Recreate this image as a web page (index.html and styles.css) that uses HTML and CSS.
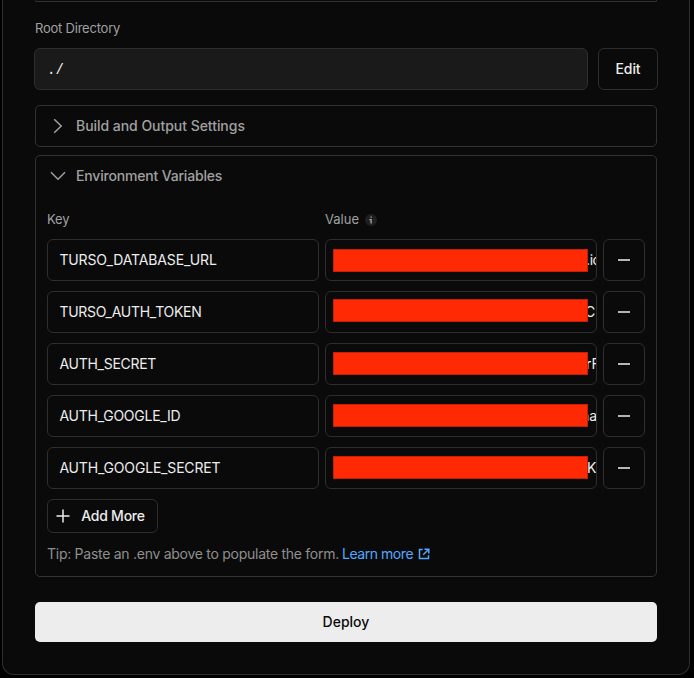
FILE: index.html
```html
<!DOCTYPE html>
<html lang="en">
<head>
<meta charset="utf-8">
<title>Deploy</title>
<link rel="stylesheet" href="styles.css">
</head>
<body>
<main class="card">
  <div class="previous-field"></div>
  <div class="label root-label"><span>Root Directory</span></div>
  <div class="root-row">
    <div class="root-input"><span>./</span></div>
    <button class="button edit"><span>Edit</span></button>
  </div>
  <section class="panel build">
    <div class="heading">
      <svg width="16" height="16" viewBox="0 0 16 16"><path d="M4.2 1.2 11.2 8l-7 6.8"/></svg>
      <span class="build-title">Build and Output Settings</span>
    </div>
  </section>
  <section class="panel environment">
    <div class="heading">
      <svg width="16" height="16" viewBox="0 0 16 16"><path d="M1 4.3 8 11.3l7-7"/></svg>
      <span class="env-title">Environment Variables</span>
    </div>
    <div class="columns label">
      <span class="key-label">Key</span>
      <span class="value-label">Value <svg class="info" width="12" height="12" viewBox="0 0 12 12"><circle cx="6" cy="6" r="6"/><path d="M5.4 2.5h1.4v1.3H5.4zM4.3 5h2.5v4.4H5.4V6.2H4.3z"/></svg></span>
    </div>
    <div class="rows">
      <div class="row"><div class="input"><span class="k1">TURSO_DATABASE_URL</span></div><div class="input value"><i class="redaction first"></i><span class="v1">.io</span></div><button class="button remove" aria-label="Remove"><i></i></button></div>
      <div class="row"><div class="input"><span class="k2">TURSO_AUTH_TOKEN</span></div><div class="input value"><i class="redaction second"></i><span class="v2">C</span></div><button class="button remove" aria-label="Remove"><i></i></button></div>
      <div class="row"><div class="input"><span class="k3">AUTH_SECRET</span></div><div class="input value"><i class="redaction"></i><span class="v3">rF</span></div><button class="button remove" aria-label="Remove"><i></i></button></div>
      <div class="row"><div class="input"><span class="k4">AUTH_GOOGLE_ID</span></div><div class="input value"><i class="redaction"></i><span class="v4">na</span></div><button class="button remove" aria-label="Remove"><i></i></button></div>
      <div class="row"><div class="input"><span class="k5">AUTH_GOOGLE_SECRET</span></div><div class="input value"><i class="redaction"></i><span>K</span></div><button class="button remove" aria-label="Remove"><i></i></button></div>
    </div>
    <button class="button add"><svg width="14" height="14" viewBox="0 0 14 14"><path d="M7 .5v13M.5 7h13"/></svg><span>Add More</span></button>
    <p class="tip"><span class="tip-text">Tip: Paste an .env above to populate the form.</span><a><span>Learn more</span><svg width="12" height="12" viewBox="0 0 12 12"><path d="M4.7 1.5H1.5v9h9V7.3M6.5 1.2h4.3v4.3M10.5 1.5 5.2 6.8"/></svg></a></p>
  </section>
  <button class="deploy"><span>Deploy</span></button>
</main>
</body>
</html>
```
FILE: styles.css
```css
* { box-sizing: border-box; }
body { margin: 0; height: 678px; overflow: hidden; background: #000; color: #ededed; font: 14px/20px Inter, "Liberation Sans", sans-serif; }
button { margin: 0; padding: 0; font: inherit; color: inherit; }
svg { flex: none; fill: none; stroke: currentColor; stroke-width: 1.5; }
span { white-space: nowrap; }
.card { width: 688px; height: 675px; margin-left: 2px; padding: 0 32px; background: #0a0a0a; border: 1px solid #2e2e2e; border-top: 0; border-radius: 0 0 12px 12px; }
.previous-field { height: 2px; border: 1px solid #333; border-top: 0; border-radius: 0 0 5px 5px; }
.label { font-size: 13px; color: #a1a1a1; }
.root-label { margin-top: 16px; height: 30px; letter-spacing: -.22px; }
.root-row { display: flex; gap: 10px; margin: 0 -1px; height: 42px; }
.root-input { flex: 1; display: flex; align-items: center; padding: 1px 0 0 12px; background: #1a1a1a; border: 1px solid #2e2e2e; border-radius: 6px; font-family: "Liberation Mono", monospace; }
.button { display: flex; align-items: center; justify-content: center; background: #0a0a0a; border: 1px solid #2e2e2e; border-radius: 6px; font-weight: 500; }
.edit { width: 60px; letter-spacing: -.1px; }
.panel { border: 1px solid #333; border-radius: 5px; }
.build { height: 42px; margin-top: 15px; }
.heading { height: 40px; display: flex; align-items: center; gap: 10px; padding-left: 14px; color: #a1a1a1; font-weight: 500; }
.build-title { letter-spacing: -.04px; }
.env-title { letter-spacing: -.18px; }
.environment { height: 422px; margin-top: 8px; padding: 0 11px; }
.environment .heading { padding-left: 3px; }
.columns { display: grid; grid-template-columns: 278px 1fr; height: 30px; margin-top: 13px; }
.key-label { letter-spacing: -.2px; }
.value-label { display: flex; gap: 6px; height: 20px; align-items: center; }
.info { stroke: none; margin-top: 2px; }
.info circle { fill: #1f1f1f; }
.info path { fill: #a1a1a1; }
.rows { display: grid; gap: 10px; }
.row { display: grid; grid-template-columns: 272px 272px 42px; gap: 6px; height: 42px; }
.input { display: flex; align-items: center; padding-left: 11.4px; border: 1px solid #2e2e2e; border-radius: 6px; min-width: 0; }
.k1 { letter-spacing: -.12px; }
.k2 { letter-spacing: -.28px; }
.k3 { letter-spacing: -.27px; }
.k4 { letter-spacing: -.25px; }
.k5 { letter-spacing: -.18px; }
.value { position: relative; padding-left: 261px; overflow: hidden; }
.redaction { position: absolute; left: 7px; top: 8px; width: 255px; height: 23px; background: #ff2903; border: 1px solid #c3200a; }
.first { top: 9px; }
.second { top: 7px; }
.v1 { margin-left: -1px; letter-spacing: -.4px; }
.v2 { margin-left: -2px; }
.v3 { margin-left: -1px; }
.v4 { margin-left: -6px; }
.remove i { width: 12px; height: 2px; background: #b5b5b5; }
.add { width: 111px; height: 34px; margin-top: 10px; gap: 11px; padding-right: 4px; letter-spacing: -.25px; }
.tip { display: flex; gap: 3px; margin: 11px 0 0; color: #8f8f8f; letter-spacing: -.27px; }
.tip a { display: flex; gap: 5px; align-items: center; color: #52a8ff; letter-spacing: -.45px; }
.deploy { display: flex; align-items: center; justify-content: center; width: 622px; height: 40px; margin-top: 25px; background: #ededed; color: #0a0a0a; border: 0; border-radius: 5px; font-weight: 500; }
```
